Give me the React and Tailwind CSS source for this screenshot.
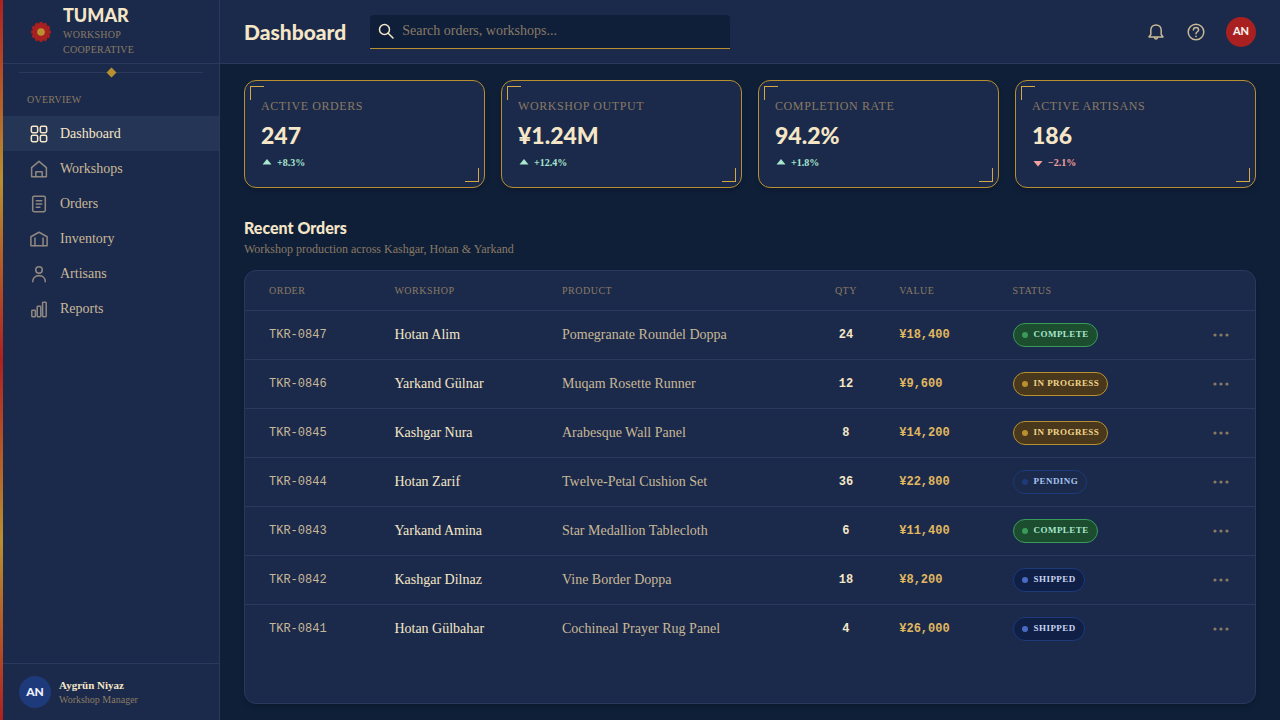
import React from "react";

const nav = [
  { label: "Dashboard", icon: "grid", active: true },
  { label: "Workshops", icon: "house" },
  { label: "Orders", icon: "doc" },
  { label: "Inventory", icon: "store" },
  { label: "Artisans", icon: "person" },
  { label: "Reports", icon: "bars" },
];

const stats = [
  { label: "Active Orders", value: "247", change: "+8.3%", up: true },
  { label: "Workshop Output", value: "¥1.24M", change: "+12.4%", up: true },
  { label: "Completion Rate", value: "94.2%", change: "+1.8%", up: true },
  { label: "Active Artisans", value: "186", change: "−2.1%", up: false },
];

const orders = [
  ["TKR-0847", "Hotan Alim", "Pomegranate Roundel Doppa", "24", "¥18,400", "Complete"],
  ["TKR-0846", "Yarkand Gülnar", "Muqam Rosette Runner", "12", "¥9,600", "In Progress"],
  ["TKR-0845", "Kashgar Nura", "Arabesque Wall Panel", "8", "¥14,200", "In Progress"],
  ["TKR-0844", "Hotan Zarif", "Twelve-Petal Cushion Set", "36", "¥22,800", "Pending"],
  ["TKR-0843", "Yarkand Amina", "Star Medallion Tablecloth", "6", "¥11,400", "Complete"],
  ["TKR-0842", "Kashgar Dilnaz", "Vine Border Doppa", "18", "¥8,200", "Shipped"],
  ["TKR-0841", "Hotan Gülbahar", "Cochineal Prayer Rug Panel", "4", "¥26,000", "Shipped"],
];

const statusStyle = {
  Complete: { pill: "bg-[#1b4d2e] border-[#3a9a5c] text-[#a8e6cf]", dot: "bg-[#3a9a5c]" },
  "In Progress": { pill: "bg-[#4a381c] border-[#b8902f] text-[#f0d48a]", dot: "bg-[#b8902f]" },
  Pending: { pill: "bg-transparent border-[#1e3a7a] text-[#a8c4f0]", dot: "bg-[#1e3a7a]" },
  Shipped: { pill: "bg-[#0f1f45] border-[#1e3a7a] text-[#c8d4f0]", dot: "bg-[#4a6bc4]" },
};

const heading = "font-['Lato','Liberation_Sans',sans-serif]";
const mono = "font-['Liberation_Mono',monospace]";

function NavIcon({ name }) {
  const shapes = {
    grid: (
      <>
        <rect x="1.5" y="1.5" width="7" height="7" rx="1.5" />
        <rect x="11.5" y="1.5" width="7" height="7" rx="1.5" />
        <rect x="1.5" y="11.5" width="7" height="7" rx="1.5" />
        <rect x="11.5" y="11.5" width="7" height="7" rx="1.5" />
      </>
    ),
    house: (
      <>
        <path d="M1.8 8.5 10 1.5l8.2 7v10H1.8z" />
        <path d="M6.5 18.5V13h7v5.5" />
      </>
    ),
    doc: (
      <>
        <rect x="3" y="1.5" width="14" height="17" rx="1.5" />
        <path d="M7 6.5h6M7 10h6M7 13.5h4" />
      </>
    ),
    store: (
      <>
        <path d="M1 7.500 10 2.500l9 5v10H1z" />
        <path d="M5.500 17.500V9M14.500 17.500V9" />
      </>
    ),
    person: (
      <>
        <circle cx="10" cy="5.5" r="3.6" />
        <path d="M3 18.5c0-4.2 3-6.7 7-6.7s7 2.5 7 6.7" />
      </>
    ),
    bars: (
      <>
        <rect x="2" y="11.5" width="4" height="7" rx="0.8" />
        <rect x="8" y="7" width="4" height="11.5" rx="0.8" />
        <rect x="14" y="2.5" width="4" height="16" rx="0.8" />
      </>
    ),
  };
  return (
    <svg viewBox="0 0 20 20" className="size-[18px] shrink-0" fill="none" stroke="currentColor" strokeWidth="1.7" strokeLinejoin="round" strokeLinecap="round" aria-hidden="true">
      {shapes[name]}
    </svg>
  );
}

function Logo() {
  const petals = Array.from({ length: 12 }, (_, i) => i * 30);
  return (
    <svg viewBox="0 0 28 28" className="size-7 shrink-0" aria-hidden="true">
      <g fill="#a82020">
        {petals.map((a) => (
          <ellipse key={a} cx="14" cy="6.2" rx="2.1" ry="2.4" transform={`rotate(${a} 14 14)`} />
        ))}
        <circle cx="14" cy="14" r="8.4" />
      </g>
      <circle cx="14" cy="14" r="3.8" fill="#b8902f" />
    </svg>
  );
}

function Sidebar() {
  return (
    <aside className="flex w-[220px] shrink-0 border-r border-[#2a3a5f] bg-[#1b2a4a]">
      <div className="w-[3px] shrink-0 bg-[linear-gradient(180deg,#b02020_0%,#b8902f_25%,#b02020_50%,#b8902f_75%,#b02020_100%)]" />
      <div className="flex min-w-0 grow flex-col">
        <div className="flex h-16 shrink-0 items-center gap-2 border-b border-[#2a3a5f] px-6">
          <Logo />
          <div className="max-w-20 pb-1">
            <div className={`${heading} text-lg leading-6 font-black text-[#f5e6c8]`}>TUMAR</div>
            <div className="text-[10px] leading-[15px] tracking-wide text-[#8a7a65] uppercase">Workshop Cooperative</div>
          </div>
        </div>
        <div className="mx-4 flex h-4 items-center">
          <span className="h-px grow bg-[#2a3a5f]" />
          <span className="size-[7px] rotate-45 bg-[#b8902f]" />
          <span className="h-px grow bg-[#2a3a5f]" />
        </div>
        <div className="px-6 pt-3 pb-2 text-[10px] leading-4 tracking-wide text-[#8a7a65] uppercase">Overview</div>
        <nav className="flex flex-col">
          {nav.map((n) => (
            <a
              key={n.label}
              href="#"
              aria-current={n.active ? "page" : undefined}
              className={`flex h-[35px] items-center gap-3 px-[27px] text-sm ${n.active ? "bg-[#253555] text-[#f5e6c8]" : "text-[#c8b898]"}`}
            >
              <span className={n.active ? "" : "text-[#8f8780]"}>
                <NavIcon name={n.icon} />
              </span>
              {n.label}
            </a>
          ))}
        </nav>
        <div className="mt-auto flex items-center gap-2 border-t border-[#2a3a5f] px-4 py-3">
          <span className={`${heading} flex size-8 items-center justify-center rounded-full bg-[#1e3a7a] text-xs font-black text-[#f0f0ff]`}>AN</span>
          <div>
            <div className="text-[11px] leading-4 font-bold text-[#f5e6c8]">Aygrün Niyaz</div>
            <div className="text-[10px] leading-[14px] text-[#8a7a65]">Workshop Manager</div>
          </div>
        </div>
      </div>
    </aside>
  );
}

function Header() {
  return (
    <header className="flex h-16 shrink-0 items-center border-b border-[#2a3a5f] bg-[#1b2a4a] px-6">
      <h1 className={`${heading} text-[21px] font-black text-[#f5e6c8]`}>Dashboard</h1>
      <label className="ml-6 flex h-[34px] w-[360px] items-center gap-2 rounded-t-sm border-b border-[#b8902f] bg-[#0f1f3a] px-2">
        <svg viewBox="0 0 16 16" className="size-4 shrink-0" fill="none" stroke="#f5e6c8" strokeWidth="1.5" strokeLinecap="round" aria-hidden="true">
          <circle cx="6.5" cy="6.5" r="5" />
          <path d="m10.2 10.2 4.8 4.8" />
        </svg>
        <input type="search" aria-label="Search" placeholder="Search orders, workshops..." className="min-w-0 grow bg-transparent text-sm text-[#f5e6c8] outline-none placeholder:text-[#8a7a65]" />
      </label>
      <div className="ml-auto flex items-center text-[#c8b898]">
        <button aria-label="Notifications" className="flex size-10 items-center justify-center">
          <svg viewBox="0 0 18 18" className="size-[18px]" fill="none" stroke="currentColor" strokeWidth="1.5" strokeLinejoin="round" strokeLinecap="round">
            <path d="M2 14h14l-1.8-2.5V7.2C14.2 3.8 12 1.9 9 1.9S3.8 3.8 3.8 7.2v4.3z" />
            <path d="M7.5 14.3c.2 1.2.8 1.7 1.5 1.7s1.3-.5 1.5-1.7" />
          </svg>
        </button>
        <button aria-label="Help" className="flex size-10 items-center justify-center">
          <svg viewBox="0 0 18 18" className="size-[18px]" fill="none" stroke="currentColor" strokeWidth="1.5" strokeLinecap="round">
            <circle cx="9" cy="9" r="7.8" />
            <path d="M6.4 7.1c0-1.6 1.2-2.6 2.6-2.6s2.6 1 2.6 2.4c0 1.8-2.6 1.9-2.6 3.9" />
            <circle cx="9" cy="13.3" r="0.9" fill="currentColor" stroke="none" />
          </svg>
        </button>
        <button aria-label="Account" className={`${heading} ml-[10px] flex size-[30px] items-center justify-center rounded-full bg-[#a82020] text-[11px] font-black text-[#f8eee8]`}>AN</button>
      </div>
    </header>
  );
}

function StatCard({ label, value, change, up }) {
  return (
    <article className="relative flex h-[108px] flex-col rounded-xl border border-[#b8902f] bg-[#1b2a4a] px-4 pt-4 shadow-md">
      <span className="absolute top-[5px] left-[5px] size-[14px] border-t border-l border-[#d4a843]" />
      <span className="absolute right-[5px] bottom-[5px] size-[14px] border-r border-b border-[#d4a843]" />
      <div className="text-xs leading-[18px] tracking-wider text-[#8a7a65] uppercase">{label}</div>
      <div className={`${heading} mt-1 text-[23px] leading-8 font-black text-[#f5e6c8]`}>{value}</div>
      <div className={`mt-1 flex items-center gap-1 text-[10px] leading-4 font-bold ${up ? "text-[#a8e6cf]" : "text-[#f4a0a0]"}`}>
        <svg viewBox="0 0 12 12" className="size-3" fill="currentColor" aria-hidden="true">
          <path d={up ? "M6 2 10.5 7.5h-9z" : "M6 9.5 1.5 4h9z"} />
        </svg>
        {change}
      </div>
    </article>
  );
}

function Orders() {
  return (
    <section className="flex grow flex-col pt-[29px]">
      <h2 className={`${heading} text-base leading-[22px] font-black text-[#f5e6c8]`}>Recent Orders</h2>
      <p className="mt-0.5 text-xs leading-4 text-[#8a7a65]">Workshop production across Kashgar, Hotan &amp; Yarkand</p>
      <div className="mt-[13px] grow overflow-hidden rounded-xl border border-[#2a3a5f] bg-[#1b2a4a] shadow-md">
        <table className="w-full table-fixed border-collapse text-left">
          <colgroup>
            <col className="w-[14%]" />
            <col className="w-[16%]" />
            <col className="w-[26%]" />
            <col className="w-[7%]" />
            <col className="w-[13%]" />
            <col className="w-[16%]" />
            <col className="w-[8%]" />
          </colgroup>
          <thead>
            <tr className="h-[39px] border-b border-[#2a3a5f] text-[10px] tracking-wider text-[#8a7a65] uppercase">
              <th className="pl-6 font-medium">Order</th>
              <th className="pl-2 font-medium">Workshop</th>
              <th className="pl-[14px] font-medium">Product</th>
              <th className="text-center font-medium">Qty</th>
              <th className="pl-[18px] font-medium">Value</th>
              <th className="font-medium">Status</th>
              <th aria-label="Actions" />
            </tr>
          </thead>
          <tbody>
            {orders.map(([id, shop, product, qty, value, status]) => (
              <tr key={id} className="h-[49px] border-b border-[#2a3a5f] text-sm last:border-b-0">
                <td className={`${mono} pl-6 text-xs text-[#c8b898]`}>{id}</td>
                <td className="pl-2 text-[#f5e6c8]">{shop}</td>
                <td className="pl-[14px] text-[#c8b898]">{product}</td>
                <td className={`${mono} text-center text-xs font-bold text-[#f5e6c8]`}>{qty}</td>
                <td className={`${mono} pl-[18px] text-xs font-bold text-[#e0b860]`}>{value}</td>
                <td>
                  <span className={`inline-flex h-6 items-center gap-1.5 rounded-full border px-2 align-middle text-[9px] font-bold tracking-wider whitespace-nowrap uppercase ${statusStyle[status].pill}`}>
                    <span className={`size-1.5 rounded-full ${statusStyle[status].dot}`} />
                    {status}
                  </span>
                </td>
                <td className="pr-6 text-right">
                  <button aria-label={`Actions for ${id}`} className="inline-flex h-6 items-center align-middle text-[#8a7a65]">
                    <svg viewBox="0 0 20 6" className="h-1.5 w-5" fill="currentColor">
                      <circle cx="4" cy="3" r="1.6" />
                      <circle cx="10" cy="3" r="1.6" />
                      <circle cx="16" cy="3" r="1.6" />
                    </svg>
                  </button>
                </td>
              </tr>
            ))}
          </tbody>
        </table>
      </div>
    </section>
  );
}

export default function App() {
  return (
    <div className="flex min-h-screen bg-[#0f1f38] font-['Liberation_Serif',serif]">
      <Sidebar />
      <div className="flex min-w-0 grow flex-col">
        <Header />
        <main className="flex grow flex-col px-6 py-4">
          <div className="grid grid-cols-4 gap-4">
            {stats.map((s) => (
              <StatCard key={s.label} {...s} />
            ))}
          </div>
          <Orders />
        </main>
      </div>
    </div>
  );
}
